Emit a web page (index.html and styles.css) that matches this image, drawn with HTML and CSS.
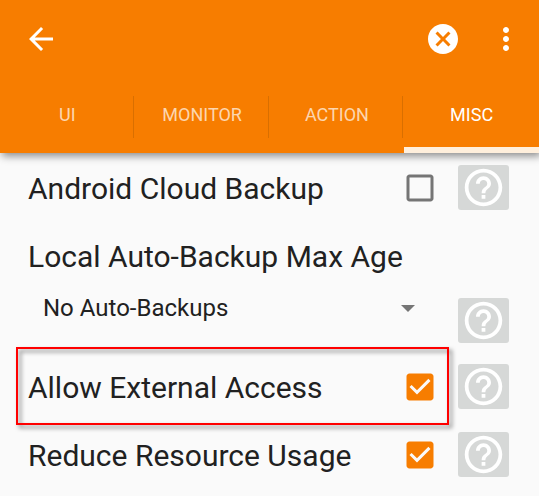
FILE: index.html
```html
<!DOCTYPE html>
<html lang="en">
<head>
<meta charset="utf-8">
<meta name="viewport" content="width=device-width, initial-scale=1">
<title>Settings</title>
<link rel="stylesheet" href="styles.css">
</head>
<body>
<svg class="symbols" aria-hidden="true">
  <symbol id="help" viewBox="0 0 24 24"><path d="M11 18h2v-2h-2v2zm1-16C6.480 2 2 6.480 2 12s4.480 10 10 10 10-4.480 10-10S17.520 2 12 2zm0 18c-4.410 0-8-3.590-8-8s3.590-8 8-8 8 3.590 8 8-3.590 8-8 8zm0-14c-2.210 0-4 1.790-4 4h2c0-1.100.9-2 2-2s2 .9 2 2c0 2-3 1.750-3 5h2c0-2.250 3-2.500 3-5 0-2.210-1.790-4-4-4z"/></symbol>
  <symbol id="unchecked" viewBox="0 0 24 24"><path d="M19 5v14H5V5h14m0-2H5c-1.100 0-2 .9-2 2v14c0 1.100.9 2 2 2h14c1.100 0 2-.9 2-2V5c0-1.100-.9-2-2-2z"/></symbol>
  <symbol id="checked" viewBox="0 0 24 24"><path d="M19 3H5c-1.110 0-2 .9-2 2v14c0 1.100.89 2 2 2h14c1.110 0 2-.9 2-2V5c0-1.100-.89-2-2-2zm-9 14l-5-5 1.410-1.410L10 14.170l7.590-7.590L19 8l-9 9z"/></symbol>
</svg>
<header class="app-bar">
  <div class="toolbar">
    <button class="icon-button" type="button" aria-label="Back"><svg viewBox="0 0 24 24"><path d="M20 11H7.830l5.590-5.590L12 4l-8 8 8 8 1.410-1.410L7.830 13H20v-2z"/></svg></button>
    <div class="actions">
      <button class="icon-button" type="button" aria-label="Cancel"><svg viewBox="0 0 24 24"><path d="M12 2C6.470 2 2 6.470 2 12s4.470 10 10 10 10-4.470 10-10S17.530 2 12 2zm5 13.590L15.590 17 12 13.410 8.410 17 7 15.590 10.590 12 7 8.410 8.410 7 12 10.590 15.590 7 17 8.410 13.410 12 17 15.590z"/></svg></button>
      <button class="icon-button" type="button" aria-label="More options"><svg viewBox="0 0 24 24"><path d="M12 8c1.100 0 2-.9 2-2s-.9-2-2-2-2 .9-2 2 .9 2 2 2zm0 2c-1.100 0-2 .9-2 2s.9 2 2 2 2-.9 2-2-.9-2-2-2zm0 6c-1.100 0-2 .9-2 2s.9 2 2 2 2-.9 2-2-.9-2-2-2z"/></svg></button>
    </div>
  </div>
  <nav class="tabs">
    <a class="tab" href="#ui">UI</a>
    <a class="tab" href="#monitor">MONITOR</a>
    <a class="tab" href="#action">ACTION</a>
    <a class="tab active" href="#misc" aria-current="page">MISC</a>
  </nav>
</header>
<main class="settings">
  <div class="row">
    <label class="label" for="cloud">Android Cloud Backup</label>
    <span class="check"><input id="cloud" type="checkbox"><svg class="off"><use href="#unchecked"/></svg><svg class="on"><use href="#checked"/></svg></span>
    <button class="help" type="button" aria-label="Help"><svg><use href="#help"/></svg></button>
  </div>
  <div class="row">
    <label class="label" for="age">Local Auto-Backup Max Age</label>
  </div>
  <div class="row spinner-row">
    <div class="spinner">
      <select id="age"><option>No Auto-Backups</option></select>
      <svg class="caret" viewBox="0 0 14 7"><path d="M0 0h14L7 7z"/></svg>
    </div>
    <button class="help" type="button" aria-label="Help"><svg><use href="#help"/></svg></button>
  </div>
  <div class="row highlighted">
    <label class="label" for="external">Allow External Access</label>
    <span class="check"><input id="external" type="checkbox" checked><svg class="off"><use href="#unchecked"/></svg><svg class="on"><use href="#checked"/></svg></span>
    <button class="help" type="button" aria-label="Help"><svg><use href="#help"/></svg></button>
  </div>
  <div class="row">
    <label class="label" for="reduce">Reduce Resource Usage</label>
    <span class="check"><input id="reduce" type="checkbox" checked><svg class="off"><use href="#unchecked"/></svg><svg class="on"><use href="#checked"/></svg></span>
    <button class="help" type="button" aria-label="Help"><svg><use href="#help"/></svg></button>
  </div>
</main>
</body>
</html>
```
FILE: styles.css
```css
* {
  box-sizing: border-box;
}

body {
  margin: 0;
  background: #fafafa;
  color: #212121;
  font-family: Roboto, "Liberation Sans", sans-serif;
}

button {
  padding: 0;
  border: 0;
  cursor: pointer;
}

svg {
  display: block;
  fill: currentColor;
}

.symbols {
  display: none;
}

/* App bar */
.app-bar {
  background: #f77d00;
  color: #fff;
  box-shadow: 2px 3px 8px rgba(0, 0, 0, 0.45);
}

.toolbar {
  display: flex;
  justify-content: space-between;
  align-items: center;
  height: 78px;
  padding: 0 15px 0 23px;
}

.actions {
  display: flex;
  gap: 27px;
}

.icon-button {
  background: none;
  color: inherit;
}

.icon-button svg {
  width: 36px;
  height: 36px;
}

.tabs {
  display: grid;
  grid-template-columns: repeat(4, 1fr);
  height: 75px;
  padding-top: 18px;
}

.tab {
  display: flex;
  flex-direction: column;
  color: rgba(255, 255, 255, 0.7);
  font-size: 18px;
  line-height: 38px;
  text-align: center;
  text-decoration: none;
  border-bottom: 6px solid transparent;
}

.tab:not(:last-child) {
  background: linear-gradient(#d96f00, #d96f00) right 1px top / 1px 42px no-repeat;
}

.tab.active {
  color: #fff;
  border-bottom-color: #ffefdc;
}

/* Settings list */
.settings {
  padding: 1px 30px 7px 28px;
}

.row {
  display: flex;
  align-items: center;
  position: relative;
  height: 68px;
}

.label {
  flex: 1;
  padding-top: 2px;
  font-size: 30px;
  line-height: 36px;
}

.check {
  display: grid;
  width: 36px;
  height: 36px;
  margin-right: 20px;
}

.check > * {
  grid-area: 1 / 1;
  width: 36px;
  height: 36px;
  margin: 0;
}

.check input {
  appearance: none;
}

.check svg {
  pointer-events: none;
}

.off {
  color: #757575;
}

.on {
  color: #f77d00;
  visibility: hidden;
}

.check input:checked ~ .on {
  visibility: visible;
}

.check input:checked ~ .off {
  visibility: hidden;
}

.help {
  display: grid;
  place-items: center;
  width: 51px;
  height: 45px;
  margin-bottom: 1px;
  border-radius: 3px;
  background: #d6d8d7;
  color: #fff;
}

.help svg {
  width: 45px;
  height: 45px;
}

.spinner-row {
  align-items: flex-start;
  height: 63px;
}

.spinner-row .help {
  margin-top: 8px;
}

.spinner {
  display: flex;
  flex: 1;
  align-items: center;
  height: 36px;
  margin-right: 43px;
  padding-left: 15px;
}

.spinner select {
  flex: 1;
  appearance: none;
  padding: 0;
  border: 0;
  background: none;
  color: inherit;
  font: 24px/36px Roboto, "Liberation Sans", sans-serif;
}

.caret {
  width: 14px;
  height: 7px;
  color: #757575;
}

.highlighted::after {
  content: "";
  position: absolute;
  inset: -6px 60px -4px -12px;
  border: 2px solid #f00;
  filter: drop-shadow(3px 3px 2px rgba(0, 0, 0, 0.5));
  pointer-events: none;
}
```
